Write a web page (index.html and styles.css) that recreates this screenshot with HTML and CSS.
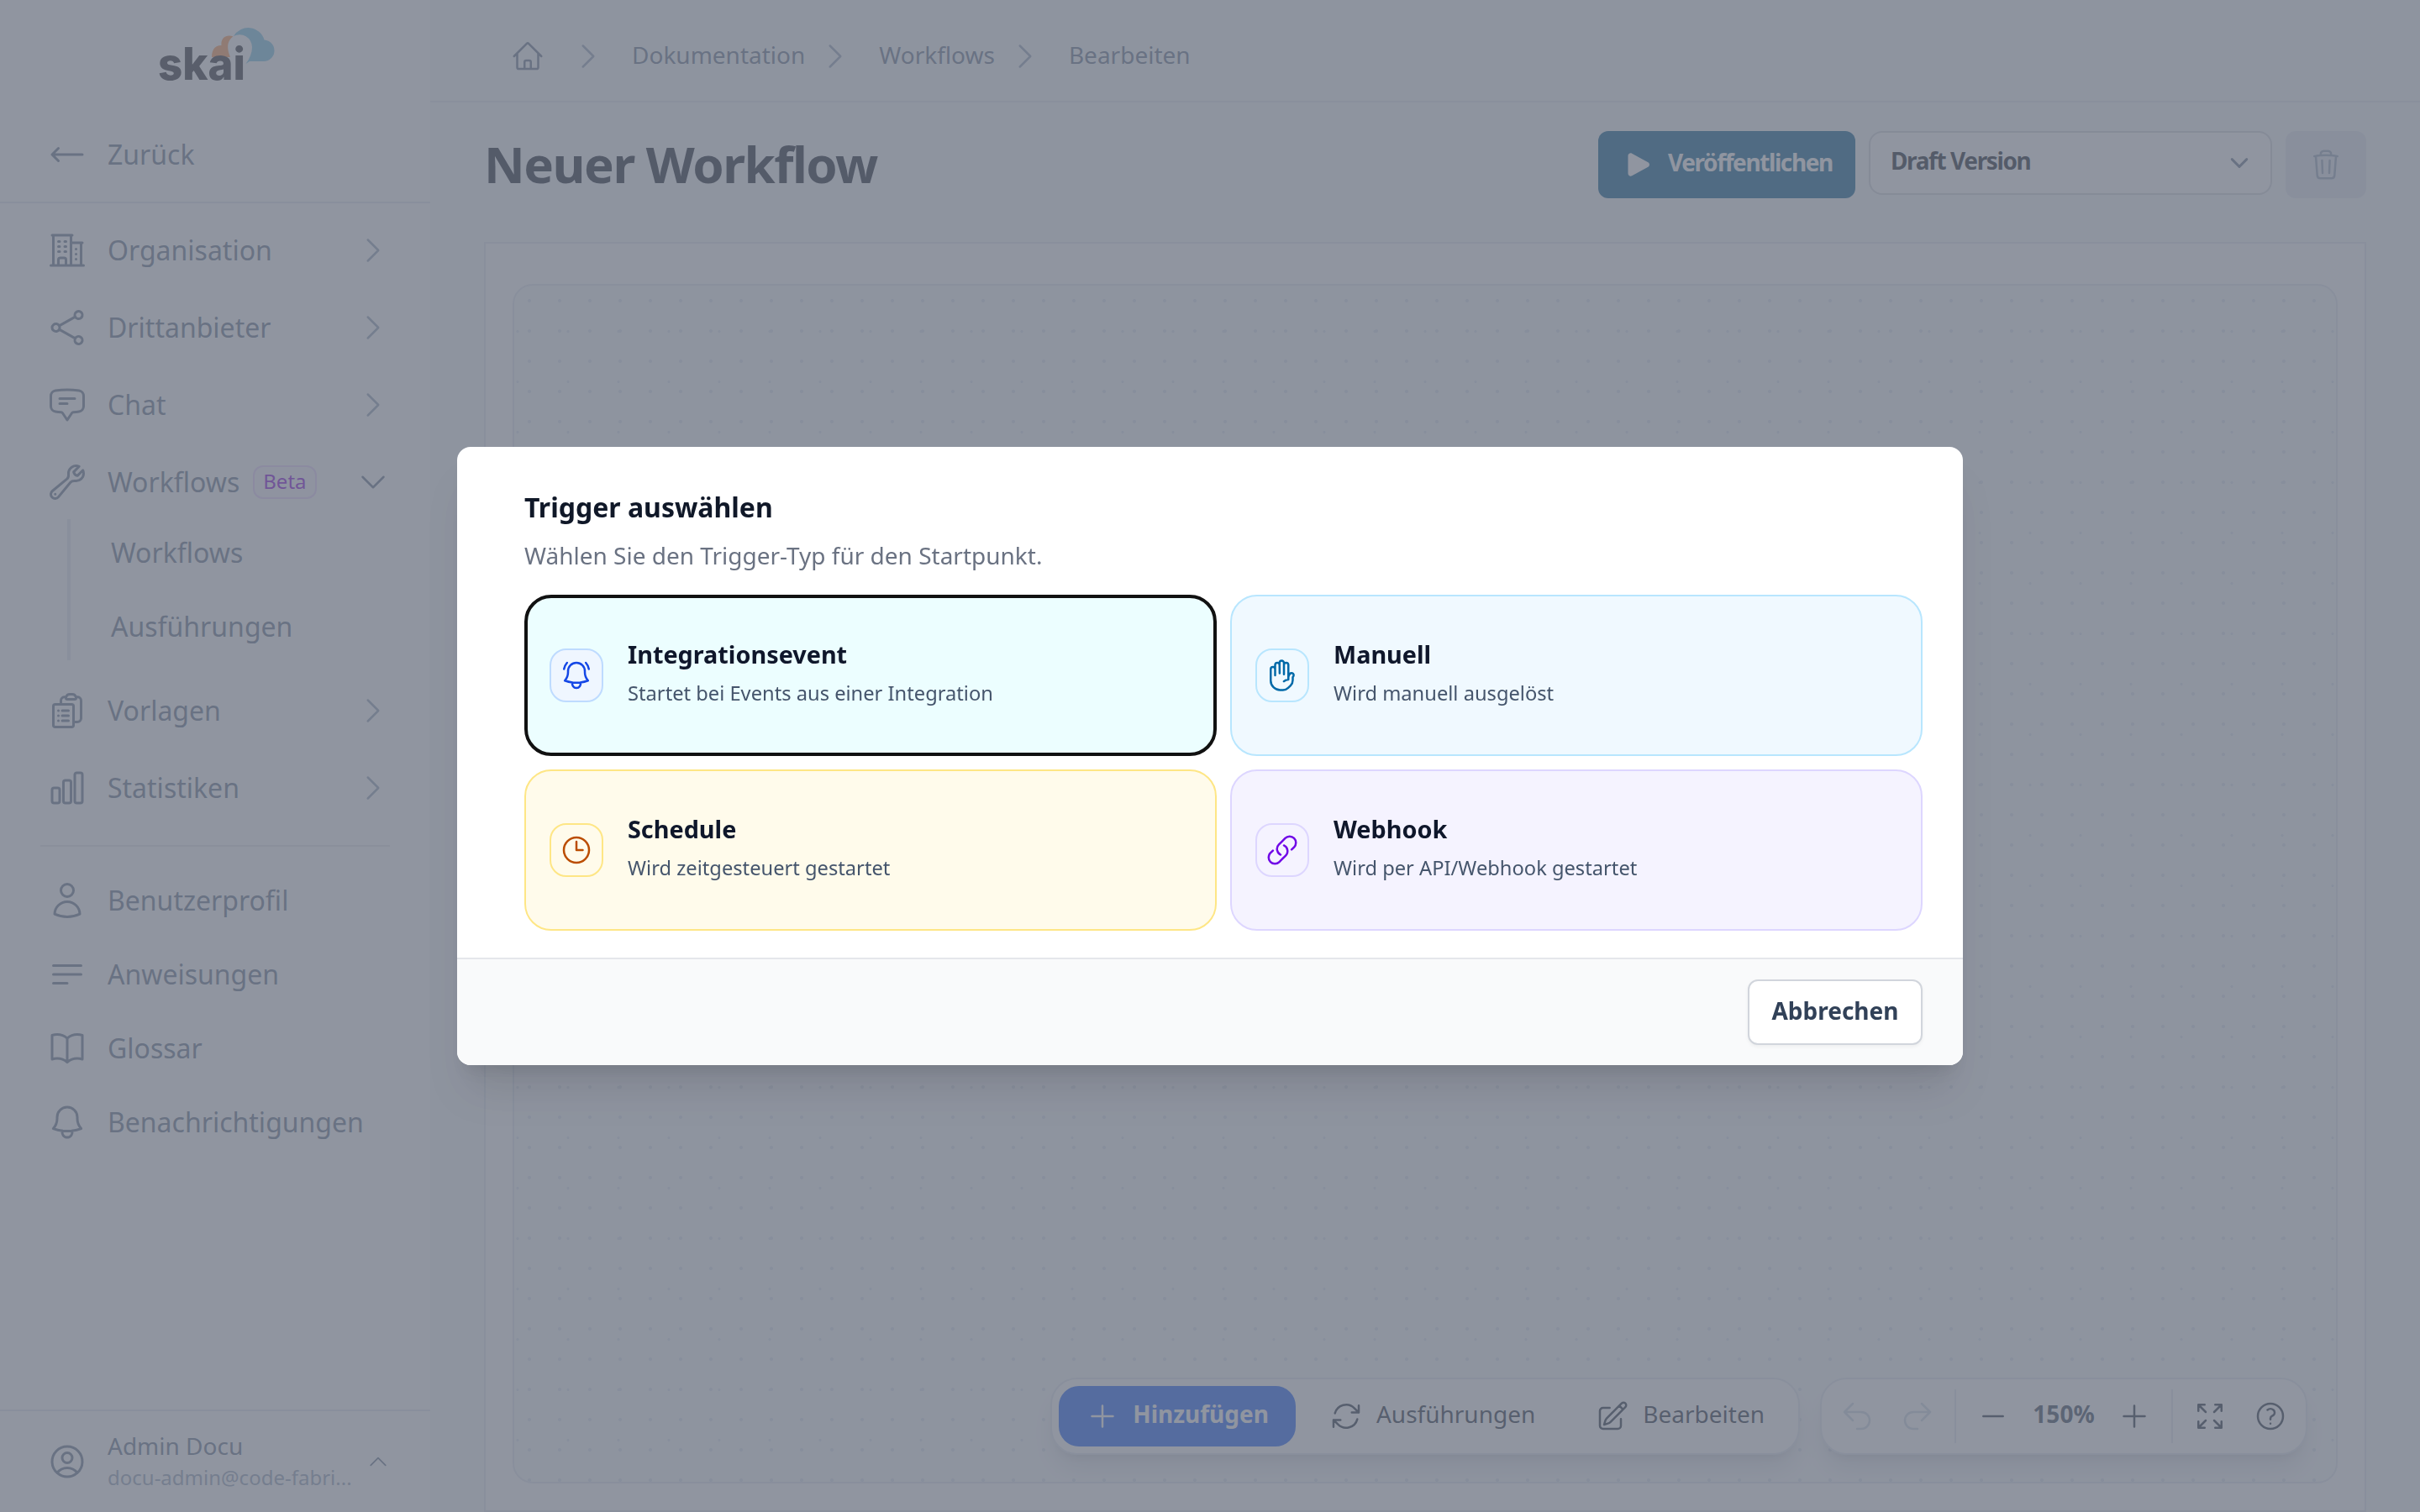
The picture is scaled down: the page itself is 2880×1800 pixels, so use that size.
FILE: index.html
```html
<!DOCTYPE html>
<html lang="de">
  <head>
    <meta charset="UTF-8" />
    <meta name="viewport" content="width=device-width, initial-scale=1.0" />
    <title>Neuer Workflow</title>
    <link rel="stylesheet" href="styles.css">
  </head>
  <body>
    <!-- shared icons -->
    <svg class="sprite">
      <symbol id="chevron-right" viewBox="0 0 24 24"><path d="m8.25 4.5 7.5 7.5-7.5 7.5" /></symbol>
      <symbol id="chevron-down" viewBox="0 0 24 24"><path d="m19.5 8.25-7.5 7.5-7.5-7.5" /></symbol>
      <symbol id="chevron-up" viewBox="0 0 24 24"><path d="m4.5 15.75 7.5-7.5 7.5 7.5" /></symbol>
      <symbol id="plus" viewBox="0 0 24 24"><path d="M12 4.5v15m7.5-7.5h-15" /></symbol>
    </svg>

    <div class="app">
      <aside class="sidebar">
        <div class="logo">
          <svg width="152" height="88" viewBox="182 20 152 88">
            <path fill="#ff9650" d="M253 68c0-9 4-14 11.5-14c-1-9 6-13.500 14-10.500C272 48 270 56 275 68Z" />
            <path fill="#74c2e4" d="M279 43A20 20 0 0 1 315.500 47.500A12.700 12.700 0 0 1 314 73H298L293.500 76Q301 66 301 56A15 15 0 0 0 279 43Z" />
            <text x="189" y="95.300" textLength="104" lengthAdjust="spacingAndGlyphs">skai</text>
          </svg>
        </div>
        <a class="nav-item back">
          <svg class="icon" viewBox="0 0 24 24"><path d="M6.75 15.75 3 12m0 0 3.75-3.75M3 12h18" /></svg>
          <span>Zurück</span>
        </a>

        <nav class="nav">
          <a class="nav-item">
            <svg class="icon" viewBox="0 0 24 24"><path d="M2.25 21h19.5m-18-18v18m10.5-18v18m6-13.5V21M6.75 6.75h.75m-.75 3h.75m-.75 3h.75m3-6h.75m-.75 3h.75m-.75 3h.75M6.75 21v-3.375c0-.621.504-1.125 1.125-1.125h2.25c.621 0 1.125.504 1.125 1.125V21M3 3h12m-.75 4.5H21m-3.75 3.75h.008v.008h-.008v-.008Zm0 3h.008v.008h-.008v-.008Zm0 3h.008v.008h-.008v-.008Z" /></svg>
            <span>Organisation</span>
            <svg class="chevron"><use href="#chevron-right" /></svg>
          </a>
          <a class="nav-item">
            <svg class="icon" viewBox="0 0 24 24"><path d="M7.217 10.907a2.25 2.25 0 1 0 0 2.186m0-2.186c.18.324.283.696.283 1.093s-.103.77-.283 1.093m0-2.186 9.566-5.314m-9.566 7.5 9.566 5.314m0 0a2.25 2.25 0 1 0 3.935 2.186 2.25 2.25 0 0 0-3.935-2.186Zm0-12.814a2.25 2.25 0 1 0 3.933-2.185 2.25 2.25 0 0 0-3.933 2.185Z" /></svg>
            <span>Drittanbieter</span>
            <svg class="chevron"><use href="#chevron-right" /></svg>
          </a>
          <a class="nav-item">
            <svg class="icon" viewBox="0 0 24 24"><path d="M7.5 8.25h9m-9 3H12m-9.75 1.51c0 1.6 1.123 2.994 2.707 3.227 1.129.166 2.27.293 3.423.379.35.026.67.21.865.501L12 21l2.755-4.133a1.14 1.14 0 0 1 .865-.501 48.172 48.172 0 0 0 3.423-.379c1.584-.233 2.707-1.626 2.707-3.228V6.741c0-1.602-1.123-2.995-2.707-3.228A48.394 48.394 0 0 0 12 3c-2.392 0-4.744.175-7.043.513C3.373 3.746 2.25 5.14 2.25 6.741v6.018Z" /></svg>
            <span>Chat</span>
            <svg class="chevron"><use href="#chevron-right" /></svg>
          </a>
          <a class="nav-item">
            <svg class="icon" viewBox="0 0 24 24"><path d="M21.75 6.75a4.5 4.5 0 0 1-4.884 4.484c-1.076-.091-2.264.071-2.95.904l-7.152 8.684a2.548 2.548 0 1 1-3.586-3.586l8.684-7.152c.833-.686.995-1.874.904-2.95a4.5 4.5 0 0 1 6.336-4.486l-3.276 3.276a3.004 3.004 0 0 0 2.25 2.25l3.276-3.276c.256.565.398 1.192.398 1.852ZM4.867 19.125h.008v.008h-.008v-.008Z" /></svg>
            <span>Workflows</span>
            <em class="beta">Beta</em>
            <svg class="chevron open"><use href="#chevron-down" /></svg>
          </a>
          <div class="sub-nav">
            <a>Workflows</a>
            <a>Ausführungen</a>
          </div>
          <a class="nav-item">
            <svg class="icon" viewBox="0 0 24 24"><path d="M9 12h3.75M9 15h3.75M9 18h3.75m3 .75H18a2.25 2.25 0 0 0 2.25-2.25V6.108c0-1.135-.845-2.098-1.976-2.192a48.424 48.424 0 0 0-1.123-.08m-5.801 0c-.065.21-.1.433-.1.664 0 .414.336.75.75.75h4.5a.75.75 0 0 0 .75-.75 2.25 2.25 0 0 0-.1-.664m-5.8 0A2.251 2.251 0 0 1 13.5 2.25H15c1.012 0 1.867.668 2.15 1.586m-5.8 0c-.376.023-.75.05-1.124.08C9.095 4.01 8.25 4.973 8.25 6.108V8.25m0 0H4.875c-.621 0-1.125.504-1.125 1.125v11.25c0 .621.504 1.125 1.125 1.125h9.75c.621 0 1.125-.504 1.125-1.125V9.375c0-.621-.504-1.125-1.125-1.125H8.25ZM6.75 12h.008v.008H6.75V12Zm0 3h.008v.008H6.75V15Zm0 3h.008v.008H6.75V18Z" /></svg>
            <span>Vorlagen</span>
            <svg class="chevron"><use href="#chevron-right" /></svg>
          </a>
          <a class="nav-item">
            <svg class="icon" viewBox="0 0 24 24"><path d="M3 13.125C3 12.504 3.504 12 4.125 12h2.25c.621 0 1.125.504 1.125 1.125v6.75C7.5 20.496 6.996 21 6.375 21h-2.25A1.125 1.125 0 0 1 3 19.875v-6.75ZM9.75 8.625c0-.621.504-1.125 1.125-1.125h2.25c.621 0 1.125.504 1.125 1.125v11.25c0 .621-.504 1.125-1.125 1.125h-2.25a1.125 1.125 0 0 1-1.125-1.125V8.625ZM16.5 4.125c0-.621.504-1.125 1.125-1.125h2.25C20.496 3 21 3.504 21 4.125v15.75c0 .621-.504 1.125-1.125 1.125h-2.25a1.125 1.125 0 0 1-1.125-1.125V4.125Z" /></svg>
            <span>Statistiken</span>
            <svg class="chevron"><use href="#chevron-right" /></svg>
          </a>
        </nav>

        <nav class="nav-secondary">
          <a class="nav-item">
            <svg class="icon" viewBox="0 0 24 24"><path d="M15.75 6a3.75 3.75 0 1 1-7.5 0 3.75 3.75 0 0 1 7.5 0ZM4.501 20.118a7.5 7.5 0 0 1 14.998 0A17.933 17.933 0 0 1 12 21.75c-2.676 0-5.216-.584-7.499-1.632Z" /></svg>
            <span>Benutzerprofil</span>
          </a>
          <a class="nav-item">
            <svg class="icon" viewBox="0 0 24 24"><path d="M3.75 6.75h16.5M3.75 12h16.5m-16.5 5.25H12" /></svg>
            <span>Anweisungen</span>
          </a>
          <a class="nav-item">
            <svg class="icon" viewBox="0 0 24 24"><path d="M12 6.042A8.967 8.967 0 0 0 6 3.75c-1.052 0-2.062.18-3 .512v14.25A8.987 8.987 0 0 1 6 18c2.305 0 4.408.867 6 2.292m0-14.25a8.966 8.966 0 0 1 6-2.292c1.052 0 2.062.18 3 .512v14.25A8.987 8.987 0 0 0 18 18a8.967 8.967 0 0 0-6 2.292m0-14.25v14.25" /></svg>
            <span>Glossar</span>
          </a>
          <a class="nav-item">
            <svg class="icon" viewBox="0 0 24 24"><path d="M14.857 17.082a23.848 23.848 0 0 0 5.454-1.31A8.967 8.967 0 0 1 18 9.75V9A6 6 0 0 0 6 9v.75a8.967 8.967 0 0 1-2.312 6.022c1.733.64 3.56 1.085 5.455 1.31m5.714 0a24.255 24.255 0 0 1-5.714 0m5.714 0a3 3 0 1 1-5.714 0" /></svg>
            <span>Benachrichtigungen</span>
          </a>
        </nav>

        <div class="user">
          <svg class="icon" viewBox="0 0 24 24"><path d="M17.982 18.725A7.488 7.488 0 0 0 12 15.75a7.488 7.488 0 0 0-5.982 2.975m11.963 0a9 9 0 1 0-11.963 0m11.963 0A8.966 8.966 0 0 1 12 21a8.966 8.966 0 0 1-5.982-2.275M15 9.75a3 3 0 1 1-6 0 3 3 0 0 1 6 0Z" /></svg>
          <div class="user-text">
            <div class="user-name">Admin Docu</div>
            <div class="user-mail">docu-admin@code-fabri...</div>
          </div>
          <svg class="chevron-small"><use href="#chevron-up" /></svg>
        </div>
      </aside>

      <main class="main">
        <header class="breadcrumb">
          <svg class="icon-md" viewBox="0 0 24 24"><path d="m2.25 12 8.954-8.955c.44-.439 1.152-.439 1.591 0L21.75 12M4.5 9.75v10.125c0 .621.504 1.125 1.125 1.125H9.75v-4.875c0-.621.504-1.125 1.125-1.125h2.25c.621 0 1.125.504 1.125 1.125V21h4.125c.621 0 1.125-.504 1.125-1.125V9.75M8.25 21h8.25" /></svg>
          <svg class="chevron first"><use href="#chevron-right" /></svg>
          <a>Dokumentation</a>
          <svg class="chevron"><use href="#chevron-right" /></svg>
          <a>Workflows</a>
          <svg class="chevron"><use href="#chevron-right" /></svg>
          <a>Bearbeiten</a>
        </header>

        <div class="title-row">
          <h1>Neuer Workflow</h1>
          <button class="publish">
            <svg class="icon-md solid" viewBox="0 0 24 24"><path d="M4.5 5.653c0-1.427 1.529-2.33 2.779-1.643l11.54 6.347c1.295.712 1.295 2.573 0 3.286L7.28 19.99c-1.25.687-2.779-.217-2.779-1.643V5.653Z" /></svg>
            <span>Veröffentlichen</span>
          </button>
          <div class="select">
            <span>Draft Version</span>
            <svg class="select-arrow"><use href="#chevron-down" /></svg>
          </div>
          <button class="delete">
            <svg class="icon-md" viewBox="0 0 24 24"><path d="m14.74 9-.346 9m-4.788 0L9.26 9m9.968-3.21c.342.052.682.107 1.022.166m-1.022-.165L18.16 19.673a2.25 2.25 0 0 1-2.244 2.077H8.084a2.25 2.25 0 0 1-2.244-2.077L4.772 5.79m14.456 0a48.108 48.108 0 0 0-3.478-.397m-12 .562c.34-.059.68-.114 1.022-.165m0 0a48.11 48.11 0 0 1 3.478-.397m7.5 0v-.916c0-1.18-.91-2.164-2.09-2.201a51.964 51.964 0 0 0-3.32 0c-1.18.037-2.09 1.022-2.09 2.201v.916m7.5 0a48.667 48.667 0 0 0-7.5 0" /></svg>
          </button>
        </div>

        <section class="panel">
          <div class="canvas">
            <div class="toolbar">
              <button class="tool add">
                <svg class="icon-md"><use href="#plus" /></svg>
                <span>Hinzufügen</span>
              </button>
              <button class="tool">
                <svg class="icon-md" viewBox="0 0 24 24"><path d="M16.023 9.348h4.992v-.001M2.985 19.644v-4.992m0 0h4.992m-4.993 0 3.181 3.183a8.25 8.25 0 0 0 13.803-3.7M4.031 9.865a8.25 8.25 0 0 1 13.803-3.7l3.181 3.182m0-4.991v4.99" /></svg>
                <span>Ausführungen</span>
              </button>
              <button class="tool">
                <svg class="icon-md" viewBox="0 0 24 24"><path d="m16.862 4.487 1.687-1.688a1.875 1.875 0 1 1 2.652 2.652L10.582 16.07a4.5 4.5 0 0 1-1.897 1.13L6 18l.8-2.685a4.5 4.5 0 0 1 1.13-1.897l8.932-8.931Zm0 0L19.5 7.125M18 14v4.75A2.25 2.25 0 0 1 15.75 21H5.25A2.25 2.25 0 0 1 3 18.75V8.25A2.25 2.25 0 0 1 5.25 6H10" /></svg>
                <span>Bearbeiten</span>
              </button>
            </div>
            <div class="toolbar view">
              <button class="tool-icon disabled"><svg class="icon-md" viewBox="0 0 24 24"><path d="M9 15 3 9m0 0 6-6M3 9h12a6 6 0 0 1 0 12h-3" /></svg></button>
              <button class="tool-icon disabled"><svg class="icon-md" viewBox="0 0 24 24"><path d="m15 15 6-6m0 0-6-6m6 6H9a6 6 0 0 0 0 12h3" /></svg></button>
              <i class="separator"></i>
              <button class="tool-icon"><svg class="icon-md" viewBox="0 0 24 24"><path d="M5 12h14" /></svg></button>
              <span class="zoom">150%</span>
              <button class="tool-icon"><svg class="icon-md"><use href="#plus" /></svg></button>
              <i class="separator"></i>
              <button class="tool-icon"><svg class="icon-md" viewBox="0 0 24 24"><path d="M3.75 3.75v4.5m0-4.5h4.5m-4.5 0L9 9M3.75 20.25v-4.5m0 4.5h4.5m-4.5 0L9 15M20.25 3.75h-4.5m4.5 0v4.5m0-4.5L15 9m5.25 11.25h-4.5m4.5 0v-4.5m0 4.5L15 15" /></svg></button>
              <button class="tool-icon"><svg class="icon-md" viewBox="0 0 24 24"><path d="M9.879 7.519c1.171-1.025 3.071-1.025 4.242 0 1.172 1.025 1.172 2.687 0 3.712-.203.179-.43.326-.67.442-.745.361-1.45.999-1.45 1.827v.75M21 12a9 9 0 1 1-18 0 9 9 0 0 1 18 0Zm-9 5.25h.008v.008H12v-.008Z" /></svg></button>
            </div>
          </div>
        </section>
      </main>
    </div>

    <!-- trigger dialog -->
    <div class="overlay">
      <div class="modal">
        <div class="modal-body">
          <h2>Trigger auswählen</h2>
          <p class="modal-hint">Wählen Sie den Trigger-Typ für den Startpunkt.</p>
          <div class="cards">
            <button class="card event">
              <span class="card-icon"><svg class="icon-md" viewBox="0 0 24 24"><path d="M14.857 17.082a23.848 23.848 0 0 0 5.454-1.31A8.967 8.967 0 0 1 18 9.75V9A6 6 0 0 0 6 9v.75a8.967 8.967 0 0 1-2.312 6.022c1.733.64 3.56 1.085 5.455 1.31m5.714 0a24.255 24.255 0 0 1-5.714 0m5.714 0a3 3 0 1 1-5.714 0M3.124 7.5A8.969 8.969 0 0 1 5.292 3m13.416 0a8.969 8.969 0 0 1 2.168 4.5" /></svg></span>
              <span class="card-text"><b>Integrationsevent</b><small>Startet bei Events aus einer Integration</small></span>
            </button>
            <button class="card manual">
              <span class="card-icon"><svg class="icon-md" viewBox="0 0 24 24"><path d="M10.05 4.575a1.575 1.575 0 1 0-3.15 0v3m3.15-3v-1.5a1.575 1.575 0 0 1 3.15 0v1.5m-3.15 0 .075 5.925m3.075.75V4.575m0 0a1.575 1.575 0 0 1 3.15 0V15M6.9 7.575a1.575 1.575 0 1 0-3.15 0v8.175a6.75 6.75 0 0 0 6.75 6.75h2.018a5.25 5.25 0 0 0 3.712-1.538l1.732-1.732a5.25 5.25 0 0 0 1.538-3.712l.003-2.024a.668.668 0 0 1 .198-.471 1.575 1.575 0 1 0-2.228-2.228 3.818 3.818 0 0 0-1.12 2.687M6.9 7.575V12m6.27 4.318A4.49 4.49 0 0 1 16.35 15m.002 0h-.002" /></svg></span>
              <span class="card-text"><b>Manuell</b><small>Wird manuell ausgelöst</small></span>
            </button>
            <button class="card schedule">
              <span class="card-icon"><svg class="icon-md" viewBox="0 0 24 24"><path d="M12 6v6h4.5m4.5 0a9 9 0 1 1-18 0 9 9 0 0 1 18 0Z" /></svg></span>
              <span class="card-text"><b>Schedule</b><small>Wird zeitgesteuert gestartet</small></span>
            </button>
            <button class="card webhook">
              <span class="card-icon"><svg class="icon-md" viewBox="0 0 24 24"><path d="M13.19 8.688a4.5 4.5 0 0 1 1.242 7.244l-4.5 4.5a4.5 4.5 0 0 1-6.364-6.364l1.757-1.757m13.35-.622 1.757-1.757a4.5 4.5 0 0 0-6.364-6.364l-4.5 4.5a4.5 4.5 0 0 0 1.242 7.244" /></svg></span>
              <span class="card-text"><b>Webhook</b><small>Wird per API/Webhook gestartet</small></span>
            </button>
          </div>
        </div>
        <div class="modal-footer">
          <button class="cancel">Abbrechen</button>
        </div>
      </div>
    </div>
  </body>
</html>
```

FILE: styles.css
```css
* {
  box-sizing: border-box;
}
body {
  margin: 0;
  font-family: "Noto Sans", sans-serif;
  font-size: 28px;
  color: #64748b;
  background-color: #f8fafc;
}
button {
  font: inherit;
  color: inherit;
  background: none;
  border: none;
  padding: 0;
  margin: 0;
}
svg {
  flex: none;
  fill: none;
  stroke: currentColor;
  stroke-width: 1.5;
  stroke-linecap: round;
  stroke-linejoin: round;
}
.sprite {
  display: none;
}
.icon {
  width: 48px;
  height: 48px;
}
.icon-md,
.chevron {
  width: 40px;
  height: 40px;
}

.app {
  display: grid;
  grid-template-columns: 512px 1fr;
  height: 1800px;
}

/* sidebar */
.sidebar {
  display: flex;
  flex-direction: column;
  background-color: #fff;
}
.logo {
  height: 128px;
  display: flex;
  justify-content: center;
  align-items: center;
}
.logo svg {
  stroke: none;
  margin-left: 2px;
}
.logo text {
  font-family: Inter, sans-serif;
  font-weight: 800;
  font-size: 53px;
  fill: #24262c;
}
.nav-item {
  display: flex;
  align-items: center;
  height: 92px;
  padding: 0 48px 0 56px;
  font-size: 32px;
}
.nav-item span {
  margin-left: 24px;
  padding-bottom: 2px;
}
.nav-item .chevron {
  margin-left: auto;
  color: #94a3b8;
}
.nav-item .chevron.open {
  color: #64748b;
}
.back {
  height: 114px;
  border-bottom: 2px solid #e2e8f0;
}
.nav {
  padding-top: 10px;
}
.beta {
  margin-left: 16px;
  height: 40px;
  padding: 0 10px;
  border: 2px solid #e9d4ff;
  border-radius: 12px;
  background-color: #faf5ff;
  color: #8200db;
  font-size: 24px;
  font-style: normal;
  line-height: 34px;
}
.sub-nav {
  display: flex;
  flex-direction: column;
  gap: 8px;
  margin: -2px 0 14px 80px;
  padding-left: 48px;
  border-left: 4px solid #e2e8f0;
  font-size: 32px;
}
.sub-nav a {
  height: 80px;
  line-height: 80px;
}
.nav-secondary {
  margin: 22px 48px 0;
  padding-top: 20px;
  border-top: 2px solid #e5e7eb;
}
.nav-secondary .nav-item {
  height: 88px;
  padding: 0 0 0 8px;
}
.user {
  display: flex;
  align-items: center;
  height: 122px;
  margin-top: auto;
  padding: 0 48px 0 56px;
  border-top: 2px solid #e2e8f0;
}
.user-text {
  flex: 1;
  margin-left: 24px;
}
.user-name {
  margin-top: -1px;
  line-height: 38px;
}
.user-mail {
  font-size: 24px;
  line-height: 37px;
  color: #94a3b8;
}
.chevron-small {
  width: 28px;
  height: 28px;
}

/* main */
.main {
  display: flex;
  flex-direction: column;
}
.breadcrumb {
  display: flex;
  align-items: center;
  height: 122px;
  padding: 14px 0 0 96px;
  border-bottom: 2px solid #e2e8f0;
}
.breadcrumb a {
  padding-bottom: 5px;
}
.breadcrumb .chevron {
  margin: 0 32px 0 16px;
  color: #94a3b8;
}
.breadcrumb .chevron.first {
  margin-left: 32px;
}
.title-row {
  display: flex;
  align-items: flex-start;
  height: 132px;
  margin: 34px 64px 0;
}
h1 {
  margin: 0 auto 0 0;
  font-size: 60px;
  line-height: 78px;
  letter-spacing: -0.025em;
  color: #111827;
}
.publish {
  display: flex;
  align-items: center;
  width: 306px;
  height: 80px;
  padding-left: 28px;
  border-radius: 12px;
  background-color: #00598a;
  color: #fff;
  font-weight: 700;
  letter-spacing: -0.05em;
}
.publish span {
  margin-left: 15px;
  padding-bottom: 7px;
}
.icon-md.solid {
  fill: currentColor;
  stroke: none;
}
.select {
  display: flex;
  align-items: center;
  justify-content: space-between;
  width: 480px;
  height: 76px;
  margin: 0 16px;
  padding: 0 23px 0 24px;
  border: 2px solid #d1d5db;
  border-radius: 16px;
  background-color: #fff;
  color: #111827;
  font-weight: 700;
  letter-spacing: -0.05em;
}
.select span {
  padding-bottom: 6px;
}
.select-arrow {
  width: 28px;
  height: 28px;
  stroke-width: 2.5;
  color: #64748b;
}
.delete {
  display: flex;
  align-items: center;
  justify-content: center;
  width: 96px;
  height: 80px;
  border-radius: 12px;
  background-color: #e2e8f0;
  color: #94a3b8;
}
.panel {
  flex: 1;
  display: flex;
  margin: 0 64px;
  padding: 48px 32px 32px;
  border: 2px solid #e2e8f0;
  background-color: #fff;
}
/* two dot grids: the base grid and the zoomed flow grid */
.canvas {
  flex: 1;
  display: flex;
  justify-content: flex-end;
  align-items: flex-end;
  gap: 24px;
  padding: 0 34px 32px 0;
  border: 2px solid #e2e8f0;
  border-radius: 24px;
  background-color: #f8fafc;
  background-image: radial-gradient(circle at 18px 18px, #dbe3ee 1.6px, transparent 2.4px),
    radial-gradient(circle at 4px 54.5px, #dbe3ee 1.1px, transparent 2px);
  background-size: 36px 36px, 60px 60px;
}
.toolbar {
  display: flex;
  gap: 8px;
  height: 92px;
  padding: 8px;
  border: 2px solid #e2e8f0;
  border-radius: 32px;
  background-color: #fff;
  color: #1e293b;
  box-shadow: 0 20px 30px -6px rgba(15, 23, 42, 0.14), 0 8px 12px -8px rgba(15, 23, 42, 0.14);
}
.toolbar.view {
  gap: 4px;
  align-items: center;
}
.tool {
  display: flex;
  align-items: center;
  gap: 16px;
  height: 72px;
  padding: 0 32px;
  border-radius: 24px;
}
.tool span {
  padding-bottom: 6px;
}
.tool.add {
  background-color: #155dfc;
  color: #fff;
  font-weight: 700;
}
.tool-icon {
  display: flex;
  align-items: center;
  justify-content: center;
  width: 68px;
  height: 72px;
}
.tool-icon.disabled {
  color: #cbd5e1;
}
.separator {
  width: 2px;
  height: 64px;
  margin: 0 6px;
  background-color: #e2e8f0;
}
.zoom {
  width: 92px;
  padding-bottom: 6px;
  text-align: center;
  font-weight: 700;
  color: #334155;
}

/* modal */
.overlay {
  position: fixed;
  inset: 0;
  display: flex;
  align-items: center;
  justify-content: center;
  background-color: rgba(107, 114, 128, 0.75);
}
.modal {
  width: 1792px;
  border-radius: 16px;
  overflow: hidden;
  background-color: #fff;
  box-shadow: 0 40px 50px -10px rgba(0, 0, 0, 0.1), 0 16px 20px -12px rgba(0, 0, 0, 0.1);
}
.modal-body {
  padding: 48px 48px 32px 80px;
}
h2 {
  margin: 0;
  font-size: 32px;
  font-weight: 700;
  line-height: 48px;
  color: #101828;
}
.modal-hint {
  margin: 13px 0 27px;
  line-height: 40px;
  color: #6a7282;
}
.cards {
  display: grid;
  grid-template-columns: 1fr 1fr;
  gap: 16px;
}
.card {
  display: flex;
  align-items: center;
  gap: 28px;
  height: 192px;
  padding: 0 28px;
  border: 2px solid;
  border-radius: 32px;
  text-align: left;
}
.card-icon {
  display: flex;
  align-items: center;
  justify-content: center;
  width: 64px;
  height: 64px;
  border: 2px solid;
  border-radius: 20px;
}
.card-text {
  display: flex;
  flex-direction: column;
  gap: 10px;
  padding: 0 0 8px 1px;
}
.card-text b {
  font-size: 28.8px;
  font-weight: 700;
  line-height: 40px;
  color: #0f172b;
}
.card-text small {
  font-size: 23.7px;
  line-height: 32px;
  color: #45556c;
}
.card.event {
  padding: 0 26px;
  border: 4px solid #111;
  background-color: #ecfeff;
}
.event .card-icon {
  border-color: #bedbff;
  background-color: #eff6ff;
  color: #1447e6;
}
.manual,
.manual .card-icon {
  border-color: #b8e6fe;
  background-color: #f0f9ff;
  color: #0069a8;
}
.schedule,
.schedule .card-icon {
  border-color: #fee685;
  background-color: #fffbeb;
  color: #bb4d00;
}
.webhook,
.webhook .card-icon {
  border-color: #ddd6ff;
  background-color: #f5f3ff;
  color: #7008e7;
}
.modal-footer {
  display: flex;
  justify-content: flex-end;
  padding: 24px 48px;
  border-top: 2px solid #e5e7eb;
  background-color: #f9fafb;
}
.cancel {
  width: 208px;
  height: 78px;
  padding-bottom: 4px;
  border: 2px solid #d1d5dc;
  border-radius: 12px;
  background-color: #fff;
  color: #314158;
  font-weight: 700;
  box-shadow: 0 2px 4px rgba(0, 0, 0, 0.05);
}
```
